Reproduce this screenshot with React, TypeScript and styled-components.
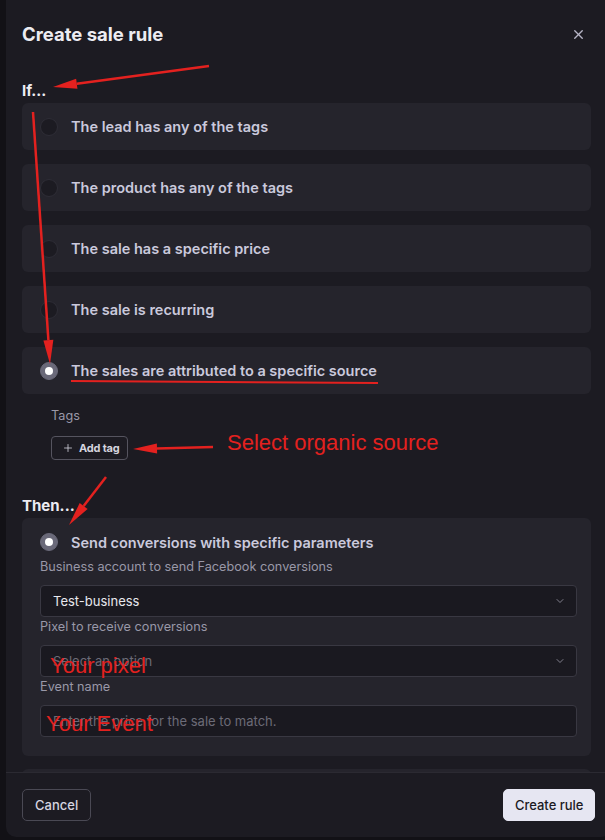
import React from 'react';
import styled, { createGlobalStyle } from 'styled-components';
import { X, ChevronDown, Plus } from 'lucide-react';

const GlobalStyle = createGlobalStyle`
  html, body {
    margin: 0;
    padding: 0;
    background: #121116;
    font-family: Inter, "Noto Sans", sans-serif;
    -webkit-font-smoothing: antialiased;
  }
`;

const Page = styled.div`
  position: relative;
  width: 605px;
  height: 840px;
  overflow: hidden;
  padding-left: 6px;
  box-sizing: border-box;
`;

const Modal = styled.div`
  width: 605px;
  height: 837px;
  background: #1c1b22;
  border-radius: 0 0 10px 10px;
  display: flex;
  flex-direction: column;
  box-sizing: border-box;
`;

const Header = styled.div`
  display: flex;
  align-items: center;
  justify-content: space-between;
  padding: 22px 25px 0 16px;
`;

const Title = styled.h1`
  margin: 0;
  font-size: 18.5px;
  line-height: 24px;
  font-weight: 700;
  color: #ececf2;
`;

const CloseButton = styled.button`
  background: none;
  border: none;
  padding: 0;
  display: flex;
  color: #b6b5c6;
  cursor: pointer;
`;

const Body = styled.div`
  flex: 1;
  min-height: 0;
  overflow: hidden;
  padding: 0 20px 0 16px;
`;

const SectionTitle = styled.div<{ $top: number }>`
  margin-top: ${(p) => p.$top}px;
  margin-bottom: 2px;
  font-size: 15px;
  line-height: 20px;
  font-weight: 700;
  color: #ececf2;
`;

const OptionList = styled.div`
  display: flex;
  flex-direction: column;
  gap: 14px;
`;

const OptionCard = styled.div`
  height: 47px;
  background: #25242c;
  border-radius: 6px;
  display: flex;
  align-items: center;
  gap: 13px;
  padding-left: 18px;
`;

const Radio = styled.span<{ $checked?: boolean }>`
  width: 18px;
  height: 18px;
  border-radius: 50%;
  box-sizing: border-box;
  flex-shrink: 0;
  display: flex;
  align-items: center;
  justify-content: center;
  background: ${(p) => (p.$checked ? '#6a6979' : '#1c1b22')};
  border: 1px solid ${(p) => (p.$checked ? '#6a6979' : '#2e2d36')};

  &::after {
    content: '';
    display: ${(p) => (p.$checked ? 'block' : 'none')};
    width: 8px;
    height: 8px;
    border-radius: 50%;
    background: #ffffff;
  }
`;

const OptionLabel = styled.span`
  font-size: 14.5px;
  font-weight: 600;
  color: #cac9dc;
`;

const TagsBlock = styled.div`
  padding: 13px 0 0 29px;
`;

const FieldLabel = styled.div<{ $top?: number }>`
  margin-top: ${(p) => p.$top ?? 0}px;
  font-size: 12.7px;
  line-height: 18px;
  color: #9998a8;
`;

const AddTagButton = styled.button`
  margin-top: 11px;
  height: 24px;
  display: inline-flex;
  align-items: center;
  gap: 5px;
  padding: 0 8px 0 10px;
  background: transparent;
  border: 1px solid #55545f;
  border-radius: 4px;
  color: #d5d4df;
  font-family: inherit;
  font-size: 11px;
  font-weight: 700;
  letter-spacing: -0.2px;
`;

const ActionCard = styled.div`
  background: #25242c;
  border-radius: 6px;
  padding: 15px 14px 19px 18px;
`;

const ActionHead = styled.div`
  display: flex;
  align-items: center;
  gap: 13px;
  height: 18px;
`;

const Select = styled.div<{ $top: number }>`
  margin-top: ${(p) => p.$top}px;
  height: 32px;
  box-sizing: border-box;
  background: #1a1920;
  border: 1px solid #393842;
  border-radius: 4px;
  display: flex;
  align-items: center;
  justify-content: space-between;
  padding: 0 10px 0 12px;
  color: #8b8a97;
`;

const SelectValue = styled.span<{ $placeholder?: boolean }>`
  font-size: 13px;
  color: ${(p) => (p.$placeholder ? '#6c6b77' : '#e8e8ee')};
`;

const HiddenCard = styled.div`
  margin-top: 13px;
  height: 40px;
  background: #25242c;
  border-radius: 6px;
`;

const Footer = styled.div`
  height: 65px;
  box-sizing: border-box;
  border-top: 1px solid #2b2a32;
  display: flex;
  align-items: center;
  justify-content: space-between;
  padding: 0 16px;
`;

const Button = styled.button<{ $primary?: boolean }>`
  height: 32px;
  box-sizing: border-box;
  padding: 0 ${(p) => (p.$primary ? 10.5 : 12)}px;
  border-radius: 5px;
  font-family: inherit;
  font-size: 13px;
  font-weight: 500;
  border: 1px solid ${(p) => (p.$primary ? '#e6e6f2' : '#4a4954')};
  background: ${(p) => (p.$primary ? '#e6e6f2' : 'transparent')};
  color: ${(p) => (p.$primary ? '#1b1a22' : '#d6d5e0')};
`;

const Overlay = styled.svg`
  position: absolute;
  inset: 0;
  pointer-events: none;
`;

const Note = styled.span<{ $x: number; $y: number }>`
  position: absolute;
  left: ${(p) => p.$x}px;
  top: ${(p) => p.$y}px;
  font-family: "Liberation Sans", Arial, sans-serif;
  font-size: 22px;
  line-height: 24px;
  color: #e3211f;
  white-space: nowrap;
  pointer-events: none;
`;

type Pt = [number, number];

const Arrow: React.FC<{ from: Pt; to: Pt }> = ({ from, to }) => {
  const [x1, y1] = from;
  const [x2, y2] = to;
  const len = Math.hypot(x2 - x1, y2 - y1);
  const ux = (x2 - x1) / len;
  const uy = (y2 - y1) / len;
  const head = 24;
  const half = 5;
  const bx = x2 - ux * head;
  const by = y2 - uy * head;
  const pts = [
    [x2, y2],
    [bx - uy * half, by + ux * half],
    [bx + uy * half, by - ux * half],
  ]
    .map((p) => p.join(','))
    .join(' ');
  return (
    <g>
      <line x1={x1} y1={y1} x2={bx} y2={by} stroke="#e3211f" strokeWidth={2.5} />
      <polygon points={pts} fill="#e3211f" />
    </g>
  );
};

const conditions = [
  'The lead has any of the tags',
  'The product has any of the tags',
  'The sale has a specific price',
  'The sale is recurring',
  'The sales are attributed to a specific source',
];

const App: React.FC = () => {
  return (
    <>
      <GlobalStyle />
      <Page>
        <Modal>
          <Header>
            <Title>Create sale rule</Title>
            <CloseButton>
              <X size={15} strokeWidth={2.2} />
            </CloseButton>
          </Header>
          <Body>
            <SectionTitle $top={35}>If...</SectionTitle>
            <OptionList>
              {conditions.map((c, i) => (
                <OptionCard key={c}>
                  <Radio $checked={i === conditions.length - 1} />
                  <OptionLabel>{c}</OptionLabel>
                </OptionCard>
              ))}
            </OptionList>
            <TagsBlock>
              <FieldLabel>Tags</FieldLabel>
              <AddTagButton>
                <Plus size={12} strokeWidth={1.6} />
                Add tag
              </AddTagButton>
            </TagsBlock>
            <SectionTitle $top={36}>Then...</SectionTitle>
            <ActionCard>
              <ActionHead>
                <Radio $checked />
                <OptionLabel>Send conversions with specific parameters</OptionLabel>
              </ActionHead>
              <FieldLabel $top={7}>Business account to send Facebook conversions</FieldLabel>
              <Select $top={9}>
                <SelectValue>Test-business</SelectValue>
                <ChevronDown size={12} strokeWidth={1.8} />
              </Select>
              <FieldLabel $top={1}>Pixel to receive conversions</FieldLabel>
              <Select $top={9}>
                <SelectValue $placeholder>Select an option</SelectValue>
                <ChevronDown size={12} strokeWidth={1.8} />
              </Select>
              <FieldLabel $top={1}>Event name</FieldLabel>
              <Select $top={9}>
                <SelectValue $placeholder>Enter the price for the sale to match.</SelectValue>
              </Select>
            </ActionCard>
            <HiddenCard />
          </Body>
          <Footer>
            <Button>Cancel</Button>
            <Button $primary>Create rule</Button>
          </Footer>
        </Modal>

        <Overlay width={605} height={840}>
          <Arrow from={[209, 66]} to={[53, 87]} />
          <Arrow from={[33, 112]} to={[50, 364]} />
          <line x1={71} y1={381} x2={378} y2={383} stroke="#e3211f" strokeWidth={2} />
          <Arrow from={[213, 447]} to={[133, 449]} />
          <Arrow from={[106, 477]} to={[69, 525]} />
        </Overlay>
        <Note $x={227} $y={431}>Select organic source</Note>
        <Note $x={50} $y={654}>Your pixel</Note>
        <Note $x={46} $y={712}>Your Event</Note>
      </Page>
    </>
  );
};

export default App;
